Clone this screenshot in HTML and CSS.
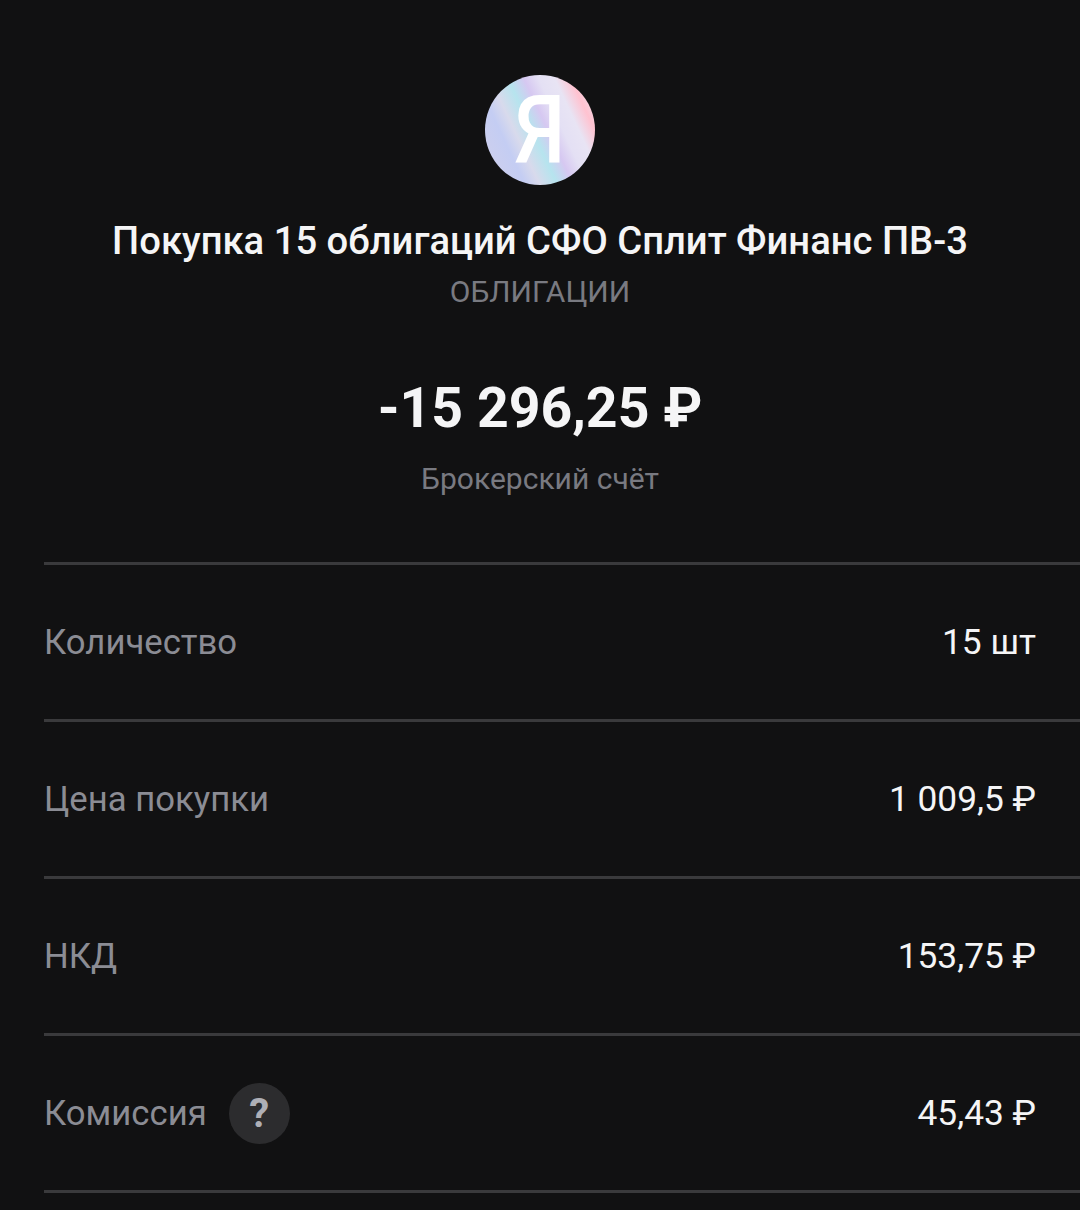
FILE: index.html
```html
<!DOCTYPE html>
<html lang="ru">
<head>
  <meta charset="UTF-8">
  <meta name="viewport" content="width=device-width, initial-scale=1.0">
  <title>Покупка облигаций</title>
  <link rel="stylesheet" href="styles.css">
</head>
<body>
  <!-- Operation header -->
  <header class="summary">
    <div class="logo"><span class="logo-letter">Я</span></div>
    <h1 class="title">Покупка 15 облигаций СФО Сплит Финанс ПВ-3</h1>
    <p class="category">ОБЛИГАЦИИ</p>
    <p class="amount">-15 296,25 ₽</p>
    <p class="account">Брокерский счёт</p>
  </header>

  <!-- Detail rows -->
  <section class="details">
    <div class="row">
      <span class="label">Количество</span>
      <span class="value">15 шт</span>
    </div>
    <div class="row">
      <span class="label">Цена покупки</span>
      <span class="value">1 009,5 ₽</span>
    </div>
    <div class="row">
      <span class="label">НКД</span>
      <span class="value">153,75 ₽</span>
    </div>
    <div class="row">
      <span class="label-group">
        <span class="label">Комиссия</span>
        <span class="hint">?</span>
      </span>
      <span class="value">45,43 ₽</span>
    </div>
  </section>
</body>
</html>
```

FILE: styles.css
```css
* {
  margin: 0;
  padding: 0;
  box-sizing: border-box;
}

body {
  background-color: #111112;
  color: #f5f5f6;
  font-family: Roboto, "Noto Sans", sans-serif;
  height: 1210px;
  overflow: hidden;
  padding-top: 75px;
}

.summary {
  display: flex;
  flex-direction: column;
  align-items: center;
}

.logo {
  width: 110px;
  height: 110px;
  border-radius: 50%;
  display: flex;
  align-items: center;
  justify-content: center;
  background: linear-gradient(65deg, #d2d0ea 0%, #c4cdf3 25%, #d8daec 34%, #b6e4ee 45%, #d6c8f1 55%, #e4e0f4 64%, #e8e4f4 74%, #ffc2d0 84%, #efdeeb 93%);
}

.logo-letter {
  color: #ffffff;
  font-size: 94px;
  font-weight: 500;
  line-height: 1;
  transform: scaleX(0.88);
}

.title {
  font-size: 38.2px;
  font-weight: 500;
  line-height: 44px;
  margin-top: 34px;
}

.category {
  color: #797a81;
  font-size: 30px;
  line-height: 36px;
  margin-top: 11px;
}

.amount {
  font-size: 55.4px;
  font-weight: 700;
  line-height: 64px;
  margin-top: 67px;
}

.account {
  color: #797a81;
  font-size: 30px;
  line-height: 36px;
  margin-top: 20px;
}

.details {
  margin-top: 65px;
  margin-left: 44px;
  border-top: 3px solid #3a3a3c;
}

.row {
  display: flex;
  justify-content: space-between;
  align-items: center;
  height: 157px;
  padding-right: 44px;
  border-bottom: 3px solid #3a3a3c;
}

.label-group {
  display: flex;
  align-items: center;
  gap: 22px;
}

.label {
  color: #8b8c94;
  font-size: 34.7px;
}

.value {
  font-size: 35.3px;
}

.hint {
  width: 61px;
  height: 61px;
  border-radius: 50%;
  background-color: #2c2c2e;
  color: #aeafb6;
  font-size: 40px;
  font-weight: 700;
  display: flex;
  align-items: center;
  justify-content: center;
}
```
